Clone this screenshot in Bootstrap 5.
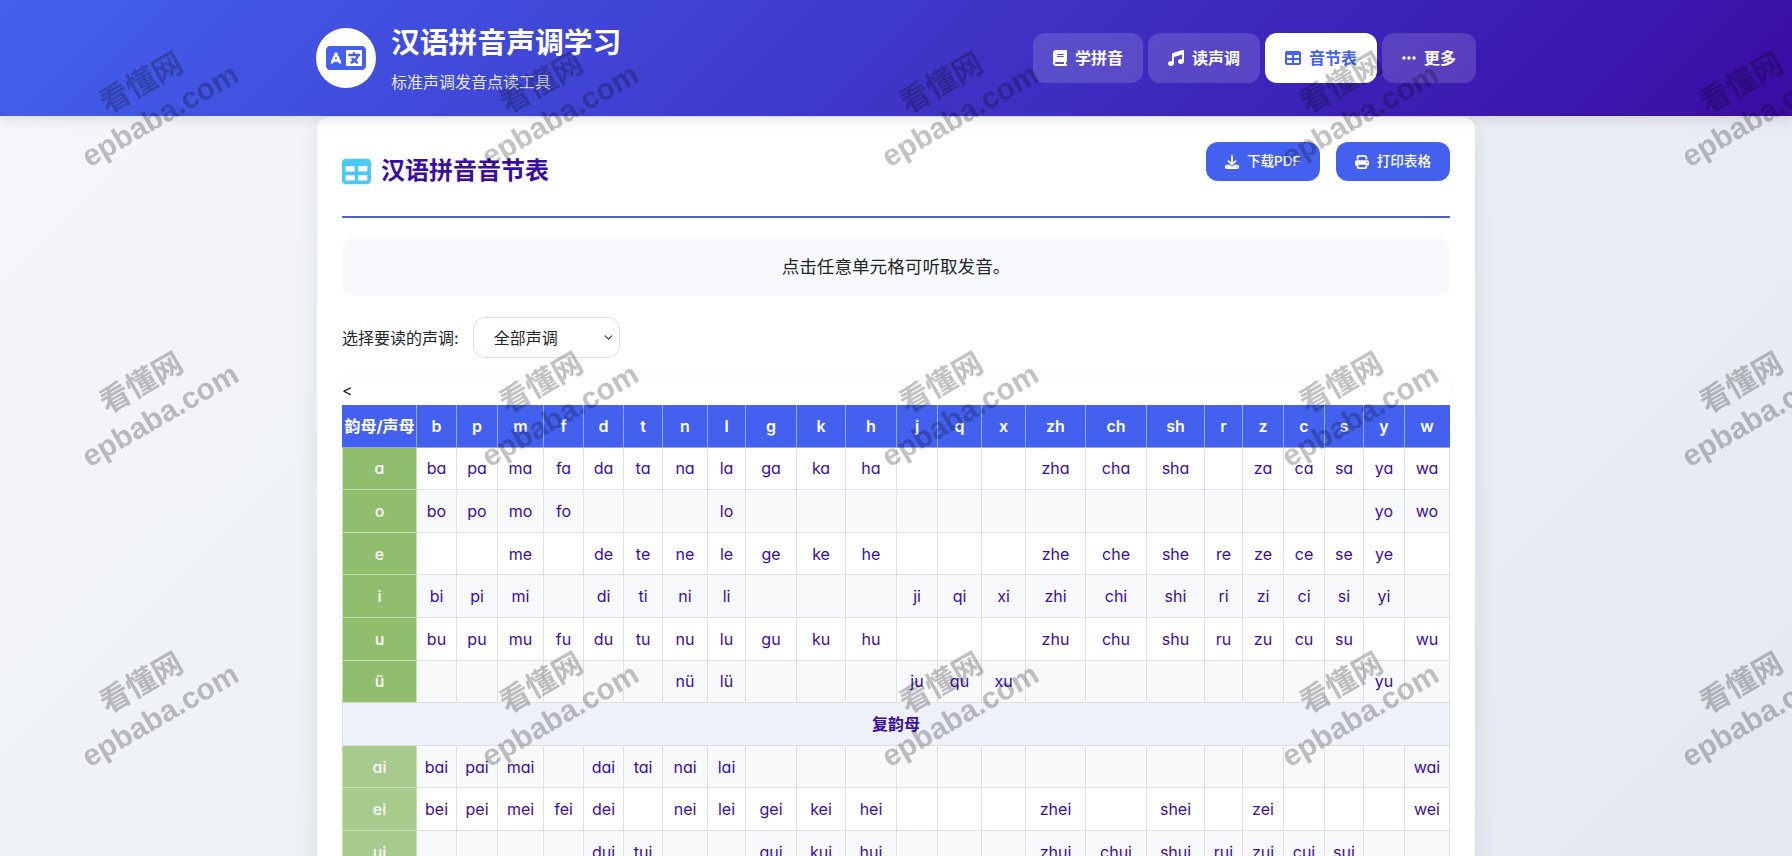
<!DOCTYPE html>
<html lang="zh-CN">
<head>
<meta charset="utf-8">
<title>汉语拼音声调学习</title>
<link rel="stylesheet" href="https://cdn.jsdelivr.net/npm/bootstrap@5.3.0/dist/css/bootstrap.min.css">
<style>
html,body{height:856px;overflow:hidden}
body{font-family:"Inter","Noto Sans CJK SC",sans-serif;font-feature-settings:"cv11";background:linear-gradient(135deg,#f5f7fa 0%,#e4e8f0 100%);color:#212529}
.top-band{height:116px;background:linear-gradient(135deg,#4361ee,#3a0ca3);box-shadow:0 4px 12px rgba(0,0,0,.1);position:relative}
.shell{width:1160px;margin:0 auto}
.brand-row{gap:15px}
.logo-disc{width:60px;height:60px;background:#fff;color:#4361ee}
.logo-disc svg{width:40px;height:32px}
.brand-text{padding-top:3px}
.brand-title{font-size:28.8px;font-weight:700;line-height:34px;margin:0 0 11px}
.brand-sub{font-size:16px;line-height:22px;color:rgba(255,255,255,.88);margin:0}
.nav-row{gap:5px}
.nav-pill{height:50px;padding:0 20px;border-radius:12px;background:rgba(255,255,255,.15);color:#fff;font-size:16px;font-weight:700;gap:8px;text-decoration:none}
.nav-pill.on{background:#fff;color:#4361ee}
.nav-pill svg{height:16px;fill:currentColor}
.sheet{width:1158px;margin:1px 0 0 1px;background:#fff;border-radius:12px 12px 0 0;padding:25px 25px 30px 25px;box-shadow:0 5px 25px rgba(0,0,0,.09)}
.sheet-head{height:76px;border-bottom:2px solid #4d63c6}
.sheet-title{color:#3a0ca3;font-size:24px;font-weight:700;line-height:30px;gap:10px;margin:14px 0 0}
.sheet-title svg{width:29px;height:29px;fill:#4cc9f0}
.act-btn{height:39px;padding:0 19px;border-radius:12px;background:#4361ee;color:#fff;font-size:13.6px;font-weight:500;gap:8px;border:0}
.act-btn:hover{background:#4361ee;color:#fff}
.act-btn svg{height:14px;fill:currentColor}
.hint-box{margin-top:20px;height:58px;border-radius:12px;background:#f8f9fc;font-size:17.6px}
.pick-row{margin-top:21px;height:41px;gap:14px}
.pick-row label{font-size:16px;margin-left:0;margin-bottom:0}
.tone-pick{width:147px;height:41px;border-radius:12px;border:1px solid #dfe1e6;padding:0 20px;font-size:16px;background-position:right 5px center;background-size:11px 9px}
.grid-wrap{margin-top:20px;width:1108px;background:#fff;box-shadow:0 0 10px rgba(0,0,0,.03)}
.stray{line-height:24px;height:27px;margin:0;padding-left:0;font-size:16px}
.py-grid{table-layout:fixed;width:1107px;border-collapse:collapse;font-size:16px;text-align:center;color:#3a0ca3}
.py-grid th,.py-grid td{height:42.6px;padding:0;border:1px solid #dee1e6;vertical-align:middle;font-weight:400}
.py-grid thead th{height:41.6px;background:#4361ee;color:#fff;font-weight:600;border-color:#97a8f5;border-top-color:#4361ee}
.py-grid thead th:first-child{font-size:16px;font-weight:700;white-space:nowrap;border-left-color:#4361ee}
.py-grid thead th:last-child{border-right-color:#4361ee}
.py-grid tbody tr:nth-child(even) td{background:#f8f9fb}
.py-grid tbody th{background:#90be6d;color:#fff;font-weight:500;border-color:#c9dfb8}
.py-grid tbody th.soft{background:#a7cb8d}
.py-grid tbody tr.band td{background:#eef1f8;color:#3a0ca3;font-weight:700;font-size:16px}
.py-grid thead th:nth-child(1){width:74px}
.py-grid thead th:nth-child(2){width:40px}
.py-grid thead th:nth-child(3){width:41px}
.py-grid thead th:nth-child(4){width:46px}
.py-grid thead th:nth-child(5){width:40px}
.py-grid thead th:nth-child(6){width:40px}
.py-grid thead th:nth-child(7){width:39px}
.py-grid thead th:nth-child(8){width:45px}
.py-grid thead th:nth-child(9){width:38px}
.py-grid thead th:nth-child(10){width:51px}
.py-grid thead th:nth-child(11){width:49px}
.py-grid thead th:nth-child(12){width:51px}
.py-grid thead th:nth-child(13){width:41px}
.py-grid thead th:nth-child(14){width:44px}
.py-grid thead th:nth-child(15){width:44px}
.py-grid thead th:nth-child(16){width:60px}
.py-grid thead th:nth-child(17){width:61px}
.py-grid thead th:nth-child(18){width:58px}
.py-grid thead th:nth-child(19){width:38px}
.py-grid thead th:nth-child(20){width:41px}
.py-grid thead th:nth-child(21){width:41px}
.py-grid thead th:nth-child(22){width:39px}
.py-grid thead th:nth-child(23){width:41px}
.py-grid thead th:nth-child(24){width:45px}
.wm-layer{position:fixed;left:-50px;top:-52px;display:grid;grid-template-columns:repeat(5,400px);grid-auto-rows:300px;z-index:50;pointer-events:none}
.wm-tile{display:flex;flex-direction:column;align-items:center;justify-content:center;transform:rotate(-30deg);color:rgba(0,0,0,.24);font-weight:700;line-height:39px}
.wm-cn{font-size:30px;font-family:"Noto Sans CJK SC",sans-serif}
.wm-en{font-size:30px;font-family:"Liberation Sans",sans-serif;font-feature-settings:normal}
</style>
</head>
<body>
<header class="top-band text-white">
  <div class="shell h-100 d-flex align-items-center justify-content-between">
    <div class="brand-row d-flex align-items-center">
      <div class="logo-disc rounded-circle d-flex align-items-center justify-content-center">
        <svg viewBox="0 0 640 512" fill="currentColor"><path d="M0 128C0 92.7 28.7 64 64 64H256h48 16H576c35.3 0 64 28.7 64 64V384c0 35.3-28.7 64-64 64H320 304 256 64c-35.3 0-64-28.7-64-64V128zm320 0V384H576V128H320zM178.3 175.9c-3.2-7.2-10.4-11.9-18.3-11.9s-15.1 4.7-18.3 11.9l-64 144c-4.5 10.1 .1 21.9 10.2 26.4s21.9-.1 26.4-10.2l8.9-20.1h73.6l8.9 20.1c4.5 10.1 16.3 14.6 26.4 10.2s14.6-16.3 10.2-26.4l-64-144zM160 233.2L179 276H141l19-42.8zM448 164c11 0 20 9 20 20v4h44 16c11 0 20 9 20 20s-9 20-20 20h-2l-1.6 4.5c-8.9 24.4-22.4 46.6-39.6 65.4c.9 .6 1.8 1.1 2.7 1.6l18.9 11.3c9.5 5.7 12.5 18 6.9 27.4s-18 12.5-27.4 6.9l-18.9-11.3c-4.5-2.7-8.8-5.5-13.1-8.5c-10.6 7.5-21.9 14-34 19.4l-3.6 1.6c-10.1 4.5-21.9-.1-26.4-10.2s.1-21.9 10.2-26.4l3.6-1.6c6.4-2.9 12.6-6.1 18.5-9.8l-12.2-12.2c-7.8-7.8-7.8-20.5 0-28.3s20.5-7.8 28.3 0l14.6 14.6 .5 .5c12.4-13.1 22.5-28.3 29.8-45H448 376c-11 0-20-9-20-20s9-20 20-20h52v-4c0-11 9-20 20-20z"/></svg>
      </div>
      <div class="brand-text">
        <h1 class="brand-title">汉语拼音声调学习</h1>
        <p class="brand-sub">标准声调发音点读工具</p>
      </div>
    </div>
    <nav class="nav-row d-flex">
      <a class="nav-pill d-flex align-items-center" href="#"><svg viewBox="0 0 448 512"><path d="M96 0C43 0 0 43 0 96V416c0 53 43 96 96 96H384h32c17.7 0 32-14.3 32-32s-14.3-32-32-32V384c17.7 0 32-14.3 32-32V32c0-17.7-14.3-32-32-32H384 96zm0 384H352v64H96c-17.7 0-32-14.3-32-32s14.3-32 32-32zm32-240c0-8.8 7.2-16 16-16H336c8.8 0 16 7.2 16 16s-7.2 16-16 16H144c-8.8 0-16-7.2-16-16zm16 48H336c8.8 0 16 7.2 16 16s-7.2 16-16 16H144c-8.8 0-16-7.2-16-16s7.2-16 16-16z"/></svg>学拼音</a>
      <a class="nav-pill d-flex align-items-center" href="#"><svg viewBox="0 0 512 512"><path d="M499.1 6.3c8.1 6 12.9 15.6 12.9 25.7v72V368c0 44.2-43 80-96 80s-96-35.8-96-80s43-80 96-80c11.2 0 22 1.6 32 4.6V147L192 223.8V432c0 44.2-43 80-96 80s-96-35.8-96-80s43-80 96-80c11.2 0 22 1.6 32 4.6V200 128c0-14.1 9.3-26.6 22.8-30.7l320-96c9.7-2.9 20.2-1.1 28.3 4.9z"/></svg>读声调</a>
      <a class="nav-pill on d-flex align-items-center" href="#"><svg viewBox="0 0 512 512"><path d="M64 256V160H224v96H64zm0 64H224v96H64V320zm224 96V320H448v96H288zM448 256H288V160H448v96zM64 32C28.7 32 0 60.7 0 96V416c0 35.3 28.7 64 64 64H448c35.3 0 64-28.7 64-64V96c0-35.3-28.7-64-64-64H64z"/></svg>音节表</a>
      <a class="nav-pill d-flex align-items-center" href="#"><svg viewBox="0 0 448 512"><path d="M8 256a56 56 0 1 1 112 0A56 56 0 1 1 8 256zm160 0a56 56 0 1 1 112 0 56 56 0 1 1 -112 0zm216-56a56 56 0 1 1 0 112 56 56 0 1 1 0-112z"/></svg>更多</a>
    </nav>
  </div>
</header>
<div class="shell">
  <main class="sheet">
    <div class="sheet-head d-flex justify-content-between align-items-start">
      <h2 class="sheet-title d-flex align-items-center"><svg viewBox="0 0 512 512"><path d="M64 256V160H224v96H64zm0 64H224v96H64V320zm224 96V320H448v96H288zM448 256H288V160H448v96zM64 32C28.7 32 0 60.7 0 96V416c0 35.3 28.7 64 64 64H448c35.3 0 64-28.7 64-64V96c0-35.3-28.7-64-64-64H64z"/></svg>汉语拼音音节表</h2>
      <div class="d-flex gap-3">
        <button class="btn act-btn d-flex align-items-center" type="button"><svg viewBox="0 0 512 512"><path d="M288 32c0-17.7-14.3-32-32-32s-32 14.3-32 32V274.7l-73.4-73.4c-12.5-12.5-32.8-12.5-45.3 0s-12.5 32.8 0 45.3l128 128c12.5 12.5 32.8 12.5 45.3 0l128-128c12.5-12.5 12.5-32.8 0-45.3s-32.8-12.5-45.3 0L288 274.7V32zM64 352c-35.3 0-64 28.7-64 64v32c0 35.3 28.7 64 64 64H448c35.3 0 64-28.7 64-64V416c0-35.3-28.7-64-64-64H346.5l-45.3 45.3c-25 25-65.5 25-90.5 0L165.5 352H64zm368 56a24 24 0 1 1 0 48 24 24 0 1 1 0-48z"/></svg>下载PDF</button>
        <button class="btn act-btn d-flex align-items-center" type="button"><svg viewBox="0 0 512 512"><path d="M128 0C92.7 0 64 28.7 64 64v96h64V64H354.7L384 93.3V160h64V93.3c0-17-6.7-33.3-18.7-45.3L400 18.7C388 6.7 371.7 0 354.7 0H128zM384 352v32 64H128V384 368 352H384zm64 32h32c17.7 0 32-14.3 32-32V256c0-35.3-28.7-64-64-64H64c-35.3 0-64 28.7-64 64v96c0 17.7 14.3 32 32 32H64v64c0 35.3 28.7 64 64 64H384c35.3 0 64-28.7 64-64V384zM432 248a24 24 0 1 1 0 48 24 24 0 1 1 0-48z"/></svg>打印表格</button>
      </div>
    </div>
    <div class="hint-box d-flex align-items-center justify-content-center">点击任意单元格可听取发音。</div>
    <div class="pick-row d-flex align-items-center">
      <label for="tonePick">选择要读的声调:</label>
      <select id="tonePick" class="form-select tone-pick"><option>全部声调</option><option>第一声</option><option>第二声</option><option>第三声</option><option>第四声</option></select>
    </div>
    <div class="grid-wrap">
      <p class="stray">&lt;</p>
      <table class="py-grid">
        <thead><tr><th>韵母/声母</th><th>b</th><th>p</th><th>m</th><th>f</th><th>d</th><th>t</th><th>n</th><th>l</th><th>g</th><th>k</th><th>h</th><th>j</th><th>q</th><th>x</th><th>zh</th><th>ch</th><th>sh</th><th>r</th><th>z</th><th>c</th><th>s</th><th>y</th><th>w</th></tr></thead>
        <tbody>
          <tr><th>a</th><td>ba</td><td>pa</td><td>ma</td><td>fa</td><td>da</td><td>ta</td><td>na</td><td>la</td><td>ga</td><td>ka</td><td>ha</td><td></td><td></td><td></td><td>zha</td><td>cha</td><td>sha</td><td></td><td>za</td><td>ca</td><td>sa</td><td>ya</td><td>wa</td></tr>
          <tr><th>o</th><td>bo</td><td>po</td><td>mo</td><td>fo</td><td></td><td></td><td></td><td>lo</td><td></td><td></td><td></td><td></td><td></td><td></td><td></td><td></td><td></td><td></td><td></td><td></td><td></td><td>yo</td><td>wo</td></tr>
          <tr><th>e</th><td></td><td></td><td>me</td><td></td><td>de</td><td>te</td><td>ne</td><td>le</td><td>ge</td><td>ke</td><td>he</td><td></td><td></td><td></td><td>zhe</td><td>che</td><td>she</td><td>re</td><td>ze</td><td>ce</td><td>se</td><td>ye</td><td></td></tr>
          <tr><th>i</th><td>bi</td><td>pi</td><td>mi</td><td></td><td>di</td><td>ti</td><td>ni</td><td>li</td><td></td><td></td><td></td><td>ji</td><td>qi</td><td>xi</td><td>zhi</td><td>chi</td><td>shi</td><td>ri</td><td>zi</td><td>ci</td><td>si</td><td>yi</td><td></td></tr>
          <tr><th>u</th><td>bu</td><td>pu</td><td>mu</td><td>fu</td><td>du</td><td>tu</td><td>nu</td><td>lu</td><td>gu</td><td>ku</td><td>hu</td><td></td><td></td><td></td><td>zhu</td><td>chu</td><td>shu</td><td>ru</td><td>zu</td><td>cu</td><td>su</td><td></td><td>wu</td></tr>
          <tr><th>ü</th><td></td><td></td><td></td><td></td><td></td><td></td><td>nü</td><td>lü</td><td></td><td></td><td></td><td>ju</td><td>qu</td><td>xu</td><td></td><td></td><td></td><td></td><td></td><td></td><td></td><td>yu</td><td></td></tr>
          <tr class="band"><td colspan="24">复韵母</td></tr>
          <tr><th class="soft">ai</th><td>bai</td><td>pai</td><td>mai</td><td></td><td>dai</td><td>tai</td><td>nai</td><td>lai</td><td></td><td></td><td></td><td></td><td></td><td></td><td></td><td></td><td></td><td></td><td></td><td></td><td></td><td></td><td>wai</td></tr>
          <tr><th class="soft">ei</th><td>bei</td><td>pei</td><td>mei</td><td>fei</td><td>dei</td><td></td><td>nei</td><td>lei</td><td>gei</td><td>kei</td><td>hei</td><td></td><td></td><td></td><td>zhei</td><td></td><td>shei</td><td></td><td>zei</td><td></td><td></td><td></td><td>wei</td></tr>
          <tr><th class="soft">ui</th><td></td><td></td><td></td><td></td><td>dui</td><td>tui</td><td></td><td></td><td>gui</td><td>kui</td><td>hui</td><td></td><td></td><td></td><td>zhui</td><td>chui</td><td>shui</td><td>rui</td><td>zui</td><td>cui</td><td>sui</td><td></td><td></td></tr>
        </tbody>
      </table>
    </div>
  </main>
</div>
<div class="wm-layer" aria-hidden="true">
  <div class="wm-tile"><span class="wm-cn">看懂网</span><span class="wm-en">epbaba.com</span></div>
  <div class="wm-tile"><span class="wm-cn">看懂网</span><span class="wm-en">epbaba.com</span></div>
  <div class="wm-tile"><span class="wm-cn">看懂网</span><span class="wm-en">epbaba.com</span></div>
  <div class="wm-tile"><span class="wm-cn">看懂网</span><span class="wm-en">epbaba.com</span></div>
  <div class="wm-tile"><span class="wm-cn">看懂网</span><span class="wm-en">epbaba.com</span></div>
  <div class="wm-tile"><span class="wm-cn">看懂网</span><span class="wm-en">epbaba.com</span></div>
  <div class="wm-tile"><span class="wm-cn">看懂网</span><span class="wm-en">epbaba.com</span></div>
  <div class="wm-tile"><span class="wm-cn">看懂网</span><span class="wm-en">epbaba.com</span></div>
  <div class="wm-tile"><span class="wm-cn">看懂网</span><span class="wm-en">epbaba.com</span></div>
  <div class="wm-tile"><span class="wm-cn">看懂网</span><span class="wm-en">epbaba.com</span></div>
  <div class="wm-tile"><span class="wm-cn">看懂网</span><span class="wm-en">epbaba.com</span></div>
  <div class="wm-tile"><span class="wm-cn">看懂网</span><span class="wm-en">epbaba.com</span></div>
  <div class="wm-tile"><span class="wm-cn">看懂网</span><span class="wm-en">epbaba.com</span></div>
  <div class="wm-tile"><span class="wm-cn">看懂网</span><span class="wm-en">epbaba.com</span></div>
  <div class="wm-tile"><span class="wm-cn">看懂网</span><span class="wm-en">epbaba.com</span></div>
</div>
<script src="https://cdn.jsdelivr.net/npm/bootstrap@5.3.0/dist/js/bootstrap.bundle.min.js"></script>
</body>
</html>
